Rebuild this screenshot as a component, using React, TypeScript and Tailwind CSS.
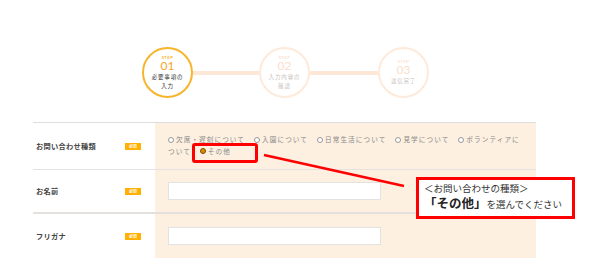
import React from "react";

const font = { fontFamily: '"Noto Sans CJK JP", "Noto Sans", sans-serif' };

function Step({ n, label, active }: { n: string; label: React.ReactNode; active?: boolean }) {
  return (
    <div
      className={
        "w-[51px] h-[51px] rounded-full bg-white flex flex-col items-center justify-center shrink-0 " +
        (active ? "border-[2px] border-[#f7b52c]" : "border-[2px] border-[#fdeadb]")
      }
    >
      <div className={"text-[4px] font-bold leading-[4px] tracking-[0.5px] " + (active ? "text-[#f7b52c]" : "text-[#fbe3d2]")}>STEP</div>
      <div className={"text-[12px] leading-[11px] mt-[1px] " + (active ? "text-[#f5a623]" : "text-[#fbe0cc]")} style={{ fontFamily: '"Lato", sans-serif' }}>{n}</div>
      <div className={"text-[5.5px] leading-[8.5px] tracking-[0.8px] text-center mt-[2px] " + (active ? "text-[#333]" : "text-[#c9c2bd]")}>{label}</div>
    </div>
  );
}

function Radio({ children, checked }: { children: React.ReactNode; checked?: boolean }) {
  return (
    <span className="mr-[9px]">
      {checked ? (
        <span className="inline-block align-middle w-[6px] h-[6px] rounded-full bg-[#e08a00] border border-[#7a4a00] mr-[2px] -mt-[1px]" />
      ) : (
        <span className="inline-block align-middle w-[6px] h-[6px] rounded-full bg-white border border-[#999] mr-[2px] -mt-[1px]" />
      )}
      {children}
    </span>
  );
}

function Badge() {
  return (
    <span className="w-[16px] h-[7px] bg-[#ffb000] text-white text-[4px] leading-[7px] text-center font-bold">必須</span>
  );
}

export default function App() {
  return (
    <div className="relative w-[600px] h-[276px] bg-white overflow-hidden" style={font}>
      {/* steps */}
      <div className="flex items-center pl-[142px] pt-[47px]">
        <Step n="01" active label={<>必要事項の<br />入力</>} />
        <div className="w-[66px] h-[4px] bg-[#fde7d6]" />
        <Step n="02" label={<>入力内容の<br />確認</>} />
        <div className="w-[68px] h-[4px] bg-[#fde7d6]" />
        <Step n="03" label={<>送信完了</>} />
      </div>

      {/* form */}
      <div className="ml-[33px] w-[503px] mt-[24px] border-t border-[#dddddd]">
        <div className="flex h-[47px] border-b border-[#e3e3e3]">
          <div className="w-[122px] flex items-center justify-between pl-[3px] pr-[14px]">
            <span className="text-[7.2px] font-bold text-[#444] tracking-[0.3px]">お問い合わせ種類</span>
            <Badge />
          </div>
          <div className="flex-1 bg-[#fdf0e1] pl-[13px] pt-[11px] pr-[12px] text-[6.6px] leading-[11.5px] text-[#888] tracking-[1.1px]">
            <Radio>欠席・遅刻について</Radio>
            <Radio>入園について</Radio>
            <Radio>日常生活について</Radio>
            <Radio>見学について</Radio>
            <Radio>ボランティアについて</Radio>
            <Radio checked>その他</Radio>
          </div>
        </div>
        <div className="flex h-[44px] border-b-[2px] border-[#e3e0dd]">
          <div className="w-[122px] flex items-center justify-between pl-[3px] pr-[14px]">
            <span className="text-[7.2px] font-bold text-[#444] tracking-[0.3px]">お名前</span>
            <Badge />
          </div>
          <div className="flex-1 bg-[#fdf0e1] flex items-center pl-[13px]">
            <div className="w-[213px] h-[18px] bg-white border border-[#e2e2e2]" />
          </div>
        </div>
        <div className="flex h-[44px]">
          <div className="w-[122px] flex items-center justify-between pl-[3px] pr-[14px]">
            <span className="text-[7.2px] font-bold text-[#444] tracking-[0.3px]">フリガナ</span>
            <Badge />
          </div>
          <div className="flex-1 bg-[#fdf0e1] flex items-center pl-[13px]">
            <div className="w-[213px] h-[18px] bg-white border border-[#e2e2e2]" />
          </div>
        </div>
      </div>

      {/* annotations */}
      <div className="absolute left-[192px] top-[143px] w-[66px] h-[20px] border-[3px] border-[#ff0000] rounded-[3px]" />
      <svg className="absolute left-0 top-0" width="600" height="276">
        <line x1="264" y1="155" x2="404" y2="186" stroke="#ff0000" strokeWidth="2.5" />
      </svg>
      <div className="absolute left-[416px] top-[177px] w-[159px] h-[42px] bg-white border-[3px] border-[#ff0000] pl-[5px] pt-[2px]">
        <div className="text-[9.5px] leading-[13px] text-[#333]">＜お問い合わせの種類＞</div>
        <div className="flex items-baseline leading-[16px]">
          <span className="text-[12.5px] font-bold text-[#222]">「その他」</span>
          <span className="text-[9.5px] text-[#333]">を選んでください</span>
        </div>
      </div>
    </div>
  );
}
